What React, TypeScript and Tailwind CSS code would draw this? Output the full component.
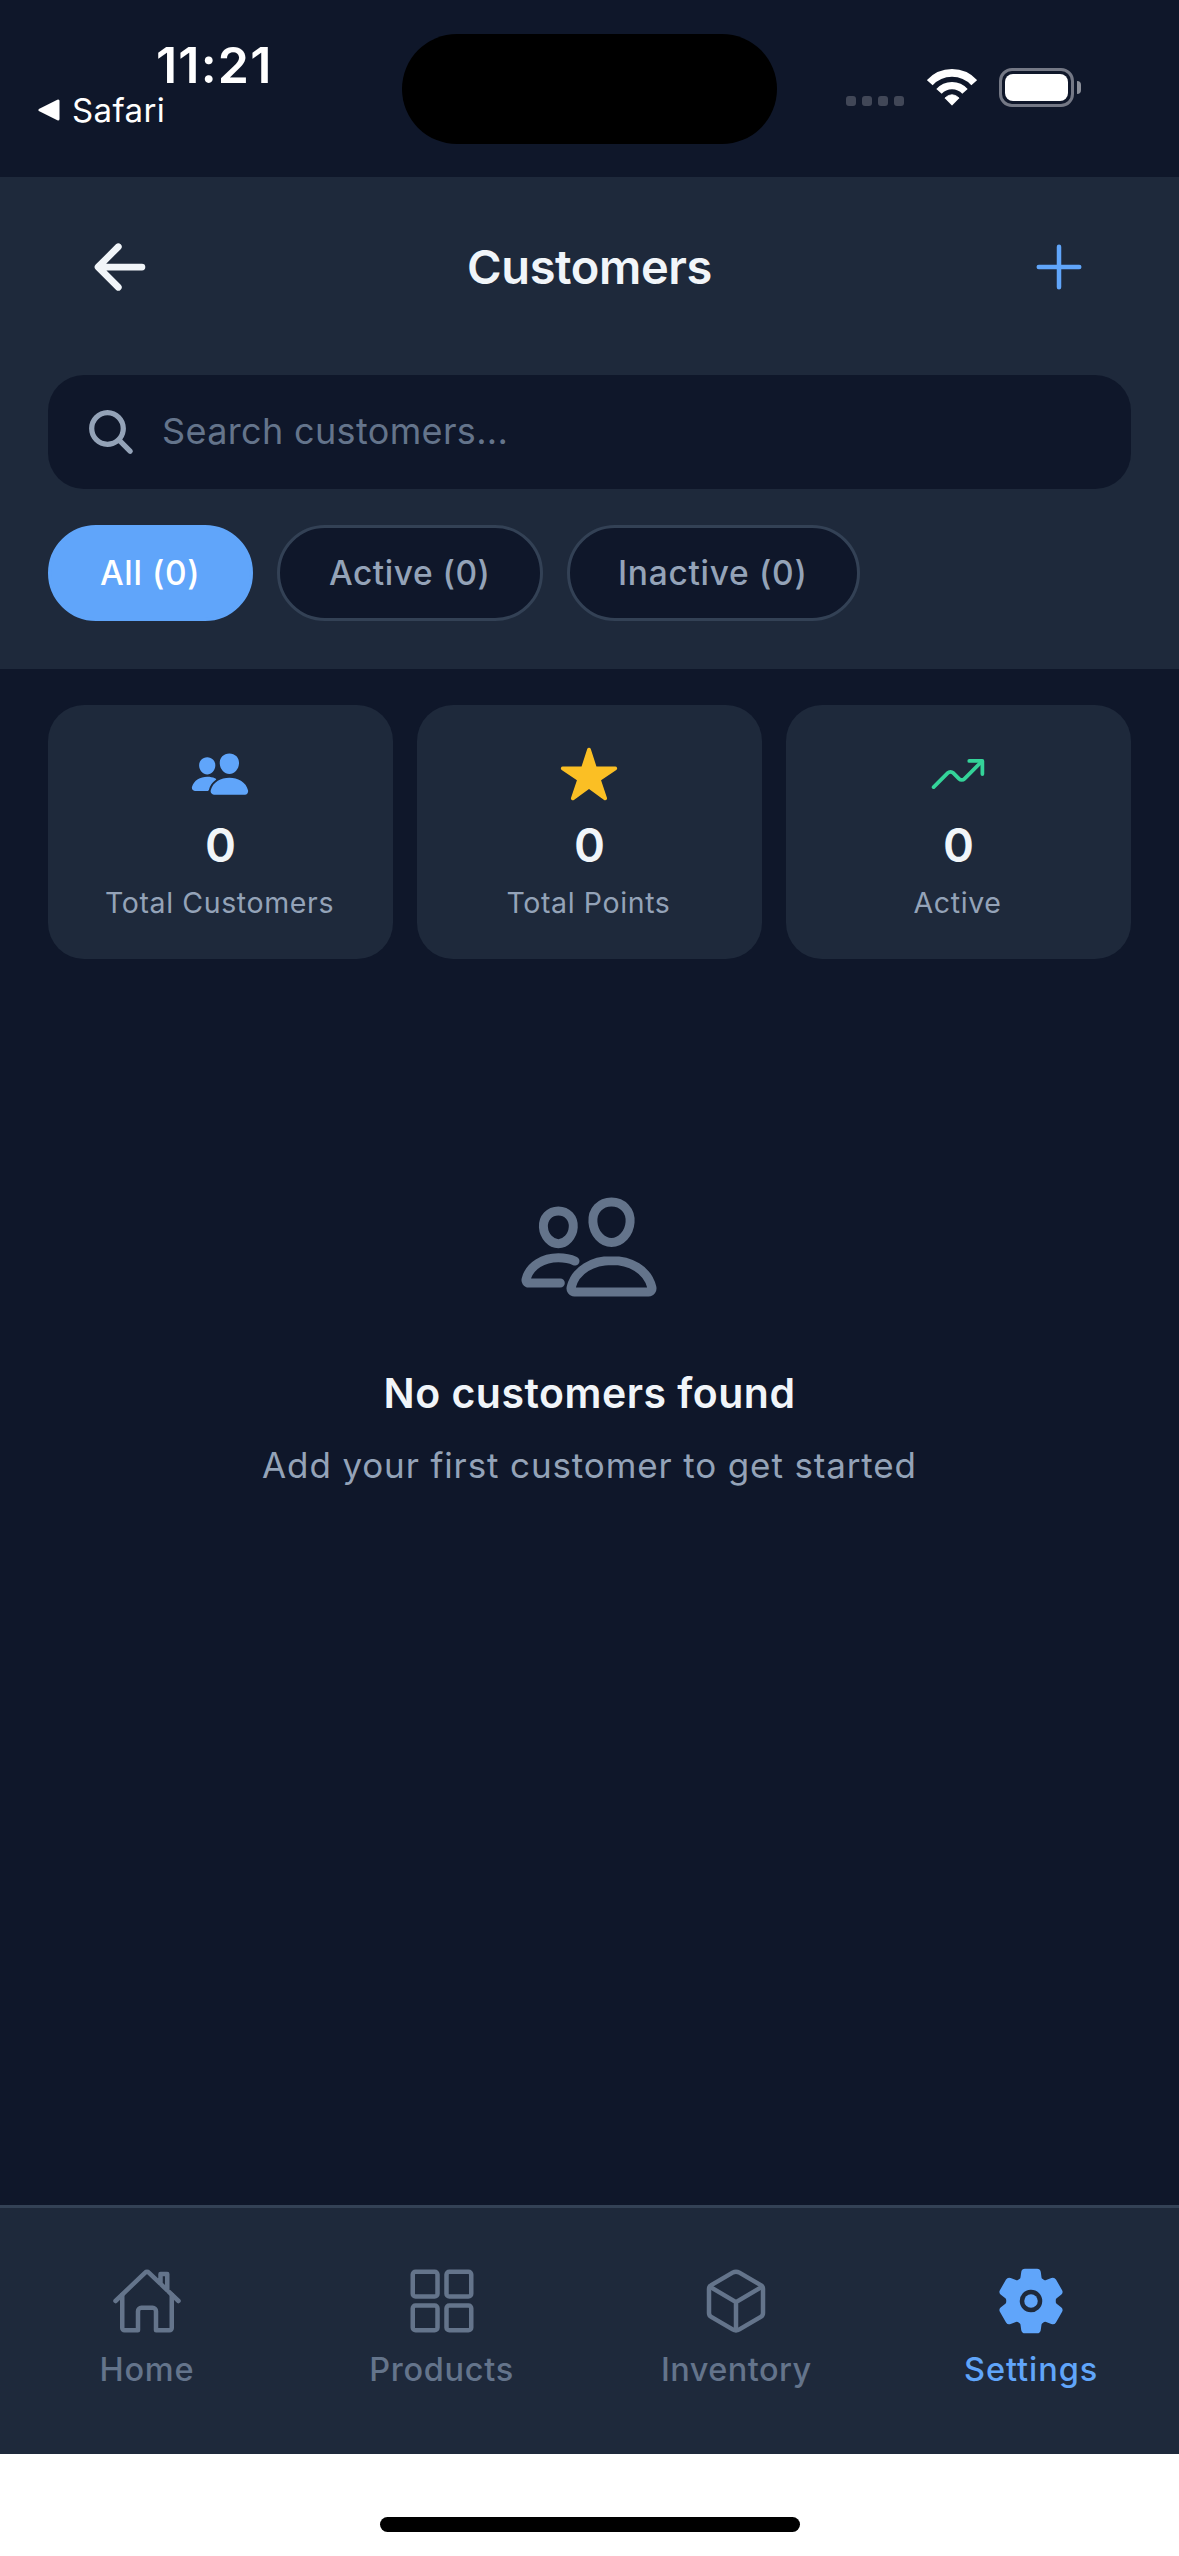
import type { ReactNode } from 'react';
import {
  IoAdd,
  IoArrowBack,
  IoCubeOutline,
  IoGridOutline,
  IoHomeOutline,
  IoPeople,
  IoPeopleOutline,
  IoSearch,
  IoSettings,
  IoStar,
  IoTrendingUp,
} from 'react-icons/io5';

function WifiIcon() {
  return (
    <svg width="50" height="37" viewBox="0 0 50 37" fill="none" stroke="white">
      <path d="M2.8 13.7A30 30 0 0 1 47.2 13.7" strokeWidth="7.7" />
      <path d="M12 22.4A17.4 17.4 0 0 1 38 22.4" strokeWidth="7.2" />
      <path d="M17.9 29Q25 22.4 32.1 29L25 36.2Z" fill="white" strokeWidth="0.8" strokeLinejoin="round" />
    </svg>
  );
}

function StatusBar() {
  return (
    <div className="relative flex h-[177px] shrink-0 justify-between">
      <div className="flex flex-col">
        <div className="mt-[35px] pl-[156px] text-[50px] leading-[60px] font-semibold tracking-[1.2px] text-white">
          11:21
        </div>
        <div className="-mt-[5px] flex h-10 items-center pl-[38px] text-white">
          <svg width="22" height="22" viewBox="0 0 22 22">
            <path
              d="M2 11L20 2V20Z"
              fill="white"
              stroke="white"
              strokeWidth="3"
              strokeLinejoin="round"
            />
          </svg>
          <span className="ml-3 text-[33px] leading-10 tracking-[0.37px]">Safari</span>
        </div>
      </div>
      <div className="absolute top-[34px] left-[402px] h-[110px] w-[375px] rounded-full bg-black" />
      <div className="mt-[68px] mr-[98px] flex h-[39px] items-start">
        <div className="mt-7 flex gap-1.5">
          {[0, 1, 2, 3].map((dot) => (
            <span key={dot} className="size-2.5 rounded-[3px] bg-[#414757]" />
          ))}
        </div>
        <div className="mt-px ml-[23px]">
          <WifiIcon />
        </div>
        <div className="ml-[22px] h-[39px] w-[75px] rounded-[13px] border-3 border-[#747885] p-[3px]">
          <div className="h-[27px] w-[63px] rounded-lg bg-white" />
        </div>
        <div className="mt-[13px] ml-[3px] h-[13px] w-1 rounded-r-full bg-[#8b8f99]" />
      </div>
    </div>
  );
}

function FilterChip({ label, className }: { label: string; className: string }) {
  return (
    <button
      className={`flex h-24 items-center rounded-full border-3 text-[33.5px] font-medium whitespace-nowrap ${className}`}
    >
      {label}
    </button>
  );
}

function StatCard({ icon, label }: { icon: ReactNode; label: string }) {
  return (
    <div className="flex h-[254px] flex-1 flex-col items-center rounded-[36px] bg-[#1e293b] pt-[39px]">
      <div className="pr-0.5">{icon}</div>
      <div className="mt-3.5 text-[47px] leading-[54px] font-semibold text-[#f1f5f9]">0</div>
      <div className="mt-3 pr-0.5 text-[28.5px] leading-[37px] tracking-[0.62px] text-[#94a3b8]">{label}</div>
    </div>
  );
}

function TabItem({ icon, label, className }: { icon: ReactNode; label: string; className: string }) {
  return (
    <button className={`flex flex-1 flex-col items-center pt-[57px] pr-px ${className}`}>
      {icon}
      <span className="mt-[13px] text-[32.5px] leading-10 font-medium">{label}</span>
    </button>
  );
}

export default function App() {
  return (
    <div className="flex h-[2556px] w-[1179px] flex-col overflow-hidden bg-[#0f172a] font-['Inter',sans-serif]">
      <StatusBar />

      <header className="flex h-[492px] shrink-0 flex-col bg-[#1e293b] px-12">
        <div className="mt-[54px] flex h-[72px] items-center px-9">
          <IoArrowBack className="size-[72px] text-[#f1f5f9]" />
          <h1 className="flex-1 text-center text-[47px] leading-[60px] font-semibold tracking-[-0.41px] text-[#f1f5f9]">
            Customers
          </h1>
          <IoAdd className="size-[72px] text-[#60a5fa]" />
        </div>
        <div className="mt-[72px] flex h-[114px] items-center rounded-[36px] bg-[#0f172a] px-9">
          <IoSearch className="size-[54px] text-[#94a3b8]" />
          <span className="ml-6 pb-0.5 text-[36px] leading-[44px] tracking-[0.35px] text-[#64748b]">
            Search customers...
          </span>
        </div>
        <div className="mt-9 flex gap-6">
          <FilterChip
            label="All (0)"
            className="w-[205px] border-[#60a5fa] bg-[#60a5fa] pl-[49px] tracking-[0.6px] text-white"
          />
          <FilterChip
            label="Active (0)"
            className="w-[266px] border-[#334155] bg-[#0f172a] pl-[49px] tracking-[0.52px] text-[#94a3b8]"
          />
          <FilterChip
            label="Inactive (0)"
            className="w-[293px] border-[#334155] bg-[#0f172a] pl-12 tracking-[0.7px] text-[#94a3b8]"
          />
        </div>
      </header>

      <main className="flex flex-1 flex-col px-12 pt-9">
        <div className="flex gap-6">
          <StatCard icon={<IoPeople className="size-[60px] text-[#60a5fa]" />} label="Total Customers" />
          <StatCard icon={<IoStar className="size-[60px] text-[#fbbf24]" />} label="Total Points" />
          <StatCard icon={<IoTrendingUp className="size-[60px] text-[#34d399]" />} label="Active" />
        </div>
        <div className="mt-[216px] flex flex-col items-center">
          <div className="pr-0.5">
            <IoPeopleOutline className="size-36 text-[#64748b]" />
          </div>
          <h2 className="mt-12 text-[41px] leading-[52px] font-semibold tracking-[0.5px] text-[#f1f5f9]">
            No customers found
          </h2>
          <p className="mt-6 text-[35px] leading-[44px] tracking-[0.87px] text-[#94a3b8]">
            Add your first customer to get started
          </p>
        </div>
      </main>

      <nav className="flex h-[249px] shrink-0 border-t-3 border-[#334155] bg-[#1e293b]">
        <TabItem
          icon={<IoHomeOutline className="size-[72px]" />}
          label="Home"
          className="tracking-[0.8px] text-[#64748b]"
        />
        <TabItem
          icon={<IoGridOutline className="size-[72px]" />}
          label="Products"
          className="tracking-[0.69px] text-[#64748b]"
        />
        <TabItem
          icon={<IoCubeOutline className="size-[72px]" />}
          label="Inventory"
          className="tracking-[0.44px] text-[#64748b]"
        />
        <TabItem
          icon={<IoSettings className="size-[72px]" />}
          label="Settings"
          className="tracking-[0.96px] text-[#60a5fa]"
        />
      </nav>

      <div className="flex h-[102px] shrink-0 justify-center bg-white pt-[63px]">
        <div className="h-[15px] w-[420px] rounded-full bg-black" />
      </div>
    </div>
  );
}
